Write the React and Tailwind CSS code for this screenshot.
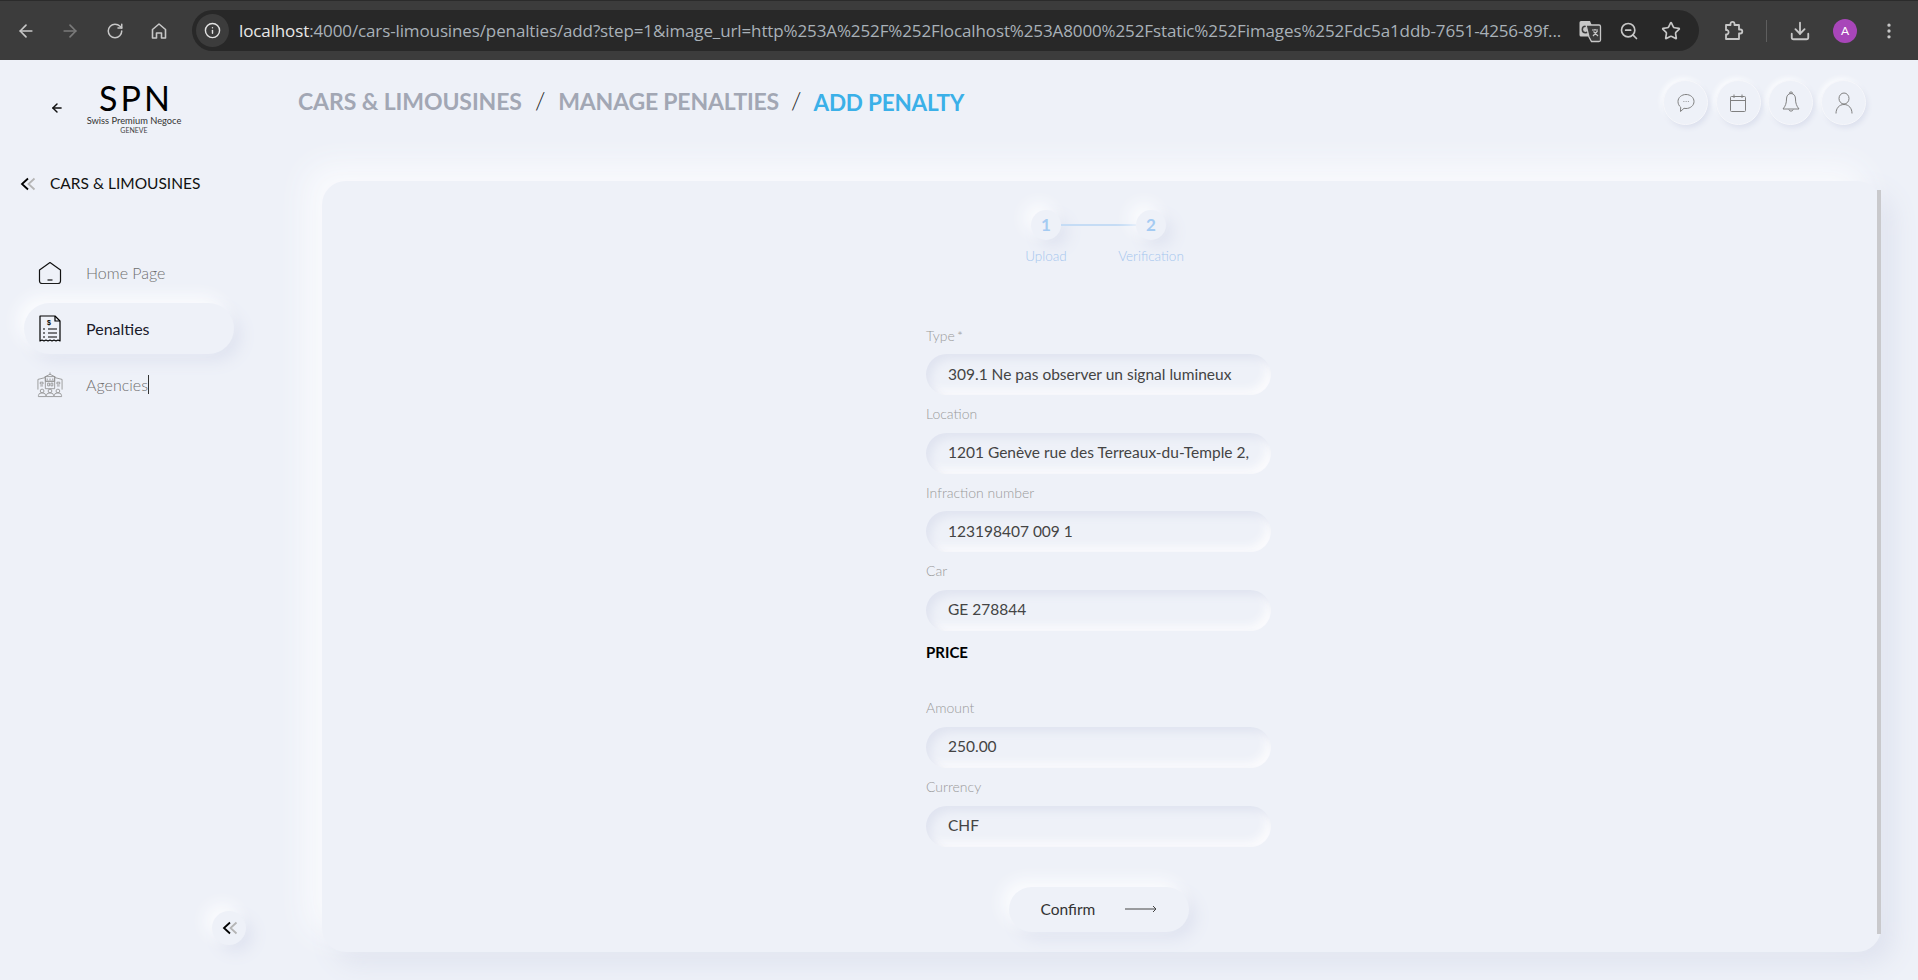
import { ArrowLeft, ArrowRight, RotateCw, Info, ZoomOut, Star, Download, MoreVertical } from 'lucide-react';

const raised = 'shadow-[-7px_-7px_16px_#fbfcfe,7px_7px_16px_#dfe3f0]';
const inset = 'shadow-[inset_5px_5px_9px_#e0e4f0,inset_-5px_-5px_9px_#fbfbfd]';

function DoubleChevron() {
  return (
    <svg width="16" height="14" viewBox="0 0 16 14" fill="none" strokeWidth="1.800">
      <path d="M8 1.500 2 7l6 5.500" stroke="#000" />
      <path d="M14.500 1.500 8.500 7l6 5.500" stroke="#b5b5b5" />
    </svg>
  );
}

function ChromeHome() {
  return (
    <svg width="20" height="20" viewBox="0 0 20 20" fill="none" stroke="#c7c7c7" strokeWidth="1.600">
      <path d="M3.500 8.500 10 3l6.500 5.500V17h-4v-5h-5v5h-4z" strokeLinejoin="round" />
    </svg>
  );
}

function TranslateIcon() {
  return (
    <svg width="24" height="24" viewBox="0 0 24 24">
      <path d="M1.500 3.500a1.500 1.500 0 0 1 1.500-1.500h9l1.500 3.500v12H3a1.500 1.500 0 0 1-1.500-1.500z" fill="#c7c7c7" />
      <circle cx="7.500" cy="10.500" r="3.200" fill="none" stroke="#3c3c3c" strokeWidth="1.500" />
      <path d="M8 6h13a1.500 1.500 0 0 1 1.500 1.500V21a1.500 1.500 0 0 1-1.500 1.500h-7.500L11 18z" fill="#3c3c3c" stroke="#c7c7c7" strokeWidth="1.300" />
      <path d="M14 11h6M17 10v1.500M15 17l4.500-5M15.500 12.500 20 17" stroke="#c7c7c7" strokeWidth="1.200" fill="none" />
    </svg>
  );
}

function PuzzleIcon() {
  return (
    <svg width="22" height="22" viewBox="0 0 22 22" fill="none" stroke="#c7c7c7" strokeWidth="1.800" strokeLinejoin="round">
      <path d="M3 5h4.500V3.800a2 2 0 0 1 4 0V5H16v4.500h1.300a2 2 0 0 1 0 4H16V19H3v-4.500h1.200a2.500 2.500 0 0 0 0-4.500H3z" />
    </svg>
  );
}

function HomeNavIcon() {
  return (
    <svg width="24" height="24" viewBox="0 0 24 24" fill="none" stroke="#111" strokeWidth="1.200" strokeLinejoin="round">
      <path d="M12 1.500 22.500 9v11a2.500 2.500 0 0 1-2.500 2.500H4A2.500 2.500 0 0 1 1.500 20V9z" />
      <path d="M9.500 19h5" />
    </svg>
  );
}

function ReceiptIcon() {
  return (
    <svg width="22" height="27" viewBox="0 0 22 27" fill="none" stroke="#000" strokeWidth="1.200">
      <path d="M1 1h15l5 5v20l-2-1-2 1-2-1-2 1-2-1-2 1-2-1-2 1-2-1-2 1z" strokeLinejoin="round" />
      <path d="M16 1v5h5" />
      <path d="M4 14h2M9 14h9M4 18h2M9 18h9M4 22h2M9 22h9" strokeWidth="1.200" />
      <text x="10" y="10" fontSize="7" fontWeight="700" fill="#000" stroke="none" textAnchor="middle" fontFamily="Liberation Sans, sans-serif">$</text>
    </svg>
  );
}

function AgencyIcon() {
  return (
    <svg width="28" height="27" viewBox="0 0 28 27" fill="none" stroke="#8f8f8f" strokeWidth="0.900">
      <path d="M14 0.500v2M9 5h10v5H9zM8 5.500 14 2.500l6 3" />
      <path d="M1 8l8-2v4M27 8l-8-2v4M1 8v11M27 8v11" />
      <path d="M9 10h10v8H9z" />
      <path d="M11 7v2M14 7v2M17 7v2M11.500 12h2v3h-2zM15 12h2v3h-2zM3.500 11h3v2h-3zM21.500 11h3v2h-3zM3.500 15h3M21.500 15h3" />
      <circle cx="5.500" cy="20.500" r="2" />
      <circle cx="14" cy="20.500" r="2" />
      <circle cx="22.500" cy="20.500" r="2" />
      <path d="M1.500 26.500v-1a4 3 0 0 1 8 0v1zM10 26.500v-1a4 3 0 0 1 8 0v1zM18.500 26.500v-1a4 3 0 0 1 8 0v1z" />
    </svg>
  );
}

function ChatIcon() {
  return (
    <svg width="18" height="20" viewBox="0 0 18 20" fill="none" stroke="#808080" strokeWidth="1">
      <path d="M9 1.500c4.400 0 8 3 8 7s-3.600 7-8 7c-.7 0-1.300-.1-2-.2L3.500 18.500l.2-4.300C2 12.900 1 10.800 1 8.500c0-4 3.600-7 8-7z" strokeLinejoin="round" />
      <path d="M6.500 8.500h.8M8.700 8.500h.8M10.900 8.500h.8" strokeWidth="1.200" />
    </svg>
  );
}

function CalendarIcon() {
  return (
    <svg width="16" height="18" viewBox="0 0 16 18" fill="none" stroke="#808080" strokeWidth="1">
      <rect x="0.500" y="2.500" width="15" height="15" rx="1" />
      <path d="M0.500 6.500h15M4 0.500v3.500M12 0.500v3.500" />
    </svg>
  );
}

function BellIcon() {
  return (
    <svg width="18" height="23" viewBox="0 0 18 23" fill="none" stroke="#808080" strokeWidth="1">
      <path d="M9 2.500c-3 0-4.500 2.500-4.500 5.500 0 4-1 7-3.500 10h16c-2.500-3-3.500-6-3.500-10 0-3-1.500-5.500-4.500-5.500z" strokeLinejoin="round" />
      <path d="M7.800 2.700a1.300 1.300 0 1 1 2.400 0M6.800 18.500a2.300 2.300 0 0 0 4.400 0" />
    </svg>
  );
}

function UserIcon() {
  return (
    <svg width="18" height="22" viewBox="0 0 18 22" fill="none" stroke="#808080" strokeWidth="1">
      <ellipse cx="9" cy="6.500" rx="5" ry="5.500" />
      <path d="M1 21.500c0-5 3-9 8-9s8 4 8 9" />
    </svg>
  );
}

function Field({ label, value, required }) {
  return (
    <div className="mb-[8.670px]">
      <label className="flex h-5 items-center text-[14px] font-light text-[#9a9a9a]">
        {label}
        {required && <span className="ml-[2px]">*</span>}
      </label>
      <input
        readOnly
        value={value}
        className={`mt-[9px] block h-[41px] w-full rounded-full bg-[#eef1f8] pb-[2px] pl-[22px] pr-[20px] text-[15.500px] text-[#444] outline-none ${inset}`}
      />
    </div>
  );
}

function TopButton({ children }) {
  return (
    <button className="flex h-[45px] w-[45px] items-center justify-center rounded-full border border-[#f6f7fb] bg-[#eef1f8] shadow-[2px_3px_5px_#dde1ee,-2px_-2px_5px_#fbfcfe]">
      {children}
    </button>
  );
}

export default function App() {
  return (
    <div className="flex h-[980px] w-[1918px] flex-col overflow-hidden bg-[#eef1f8] font-['Lato',sans-serif]">
      {/* browser bar */}
      <div className="flex h-[60px] items-center border-t border-[#2b2b2b] bg-[#3c3c3c] pl-[16px] pr-[16px]">
        <ArrowLeft size={20} color="#c7c7c7" />
        <ArrowRight size={20} color="#7a7a7a" className="ml-[24px]" />
        <RotateCw size={18} color="#c7c7c7" className="ml-[26px]" />
        <span className="ml-[25px]"><ChromeHome /></span>
        <div className="ml-[23px] flex h-[41px] w-[1507px] items-center rounded-full bg-[#282828] pl-[4px] pr-[16px]">
          <div className="flex h-[33px] w-[33px] items-center justify-center rounded-full bg-[#3c3c3c]">
            <Info size={17} color="#e3e3e3" />
          </div>
          <div className="ml-[10px] w-[1322px] overflow-hidden whitespace-nowrap font-['Open_Sans',sans-serif] text-[17px] tracking-[-0.12px] text-[#a9b1b8]">
            <span className="text-[#e8e8e8]">localhost</span>:4000/cars-limousines/penalties/add?step=1&amp;image_url=http%253A%252F%252Flocalhost%253A8000%252Fstatic%252Fimages%252Fdc5a1ddb-7651-4256-89f...
          </div>
          <span className="ml-[17px]"><TranslateIcon /></span>
          <ZoomOut size={20} color="#c7c7c7" className="ml-[17px]" />
          <Star size={20} color="#c7c7c7" className="ml-[22px]" />
        </div>
        <span className="ml-[24px]"><PuzzleIcon /></span>
        <div className="ml-[21px] h-[22px] w-px bg-[#5e5e5e]" />
        <Download size={22} color="#c7c7c7" className="ml-[22px]" />
        <div className="ml-[22px] flex h-[24px] w-[24px] items-center justify-center rounded-full bg-[#a846b9] text-[12px] text-white">A</div>
        <MoreVertical size={20} color="#c7c7c7" className="ml-[22px]" />
      </div>

      <div className="flex flex-1">
        {/* sidebar */}
        <aside className="flex w-[322px] shrink-0 flex-col">
          <div className="mt-[22px] flex h-[56px] items-start">
            <ArrowLeft size={14} color="#111" strokeWidth={2.500} className="ml-[50px] mt-[19px]" />
            <div className="ml-[23px] flex w-[94px] flex-col items-center">
              <div className="mt-[-1px] h-[33px] pl-[4px] text-[34px] font-normal leading-[33px] tracking-[3px] text-black">SPN</div>
              <div className="mt-[2px] whitespace-nowrap text-[9.300px] leading-[10px] text-[#333]">Swiss Premium Negoce</div>
              <div className="text-[7px] leading-[8px] text-[#444]">GENEVE</div>
            </div>
          </div>
          <div className="mt-[34px] flex h-[24px] items-center pl-[20px]">
            <DoubleChevron />
            <span className="ml-[14px] text-[15.500px] text-[#111]">CARS &amp; LIMOUSINES</span>
          </div>
          <nav className="ml-[24px] mt-[51px] flex w-[210px] flex-col gap-[5px]">
            <div className="flex h-[51px] items-center pl-[13px]">
              <span className="flex w-[26px] justify-center"><HomeNavIcon /></span>
              <span className="ml-[23px] text-[16px] font-light text-[#6f6f6f]">Home Page</span>
            </div>
            <div className={`flex h-[51px] items-center rounded-full bg-[#eef1f8] pl-[13px] ${raised}`}>
              <span className="flex w-[26px] justify-center"><ReceiptIcon /></span>
              <span className="ml-[23px] text-[16px] text-[#1a1a2a]">Penalties</span>
            </div>
            <div className="flex h-[51px] items-center pl-[13px]">
              <span className="flex w-[26px] justify-center"><AgencyIcon /></span>
              <span className="ml-[23px] border-r border-[#333] text-[16px] font-light leading-[19px] text-[#6f6f6f]">Agencies</span>
            </div>
          </nav>
          <button className={`mb-[35px] ml-[212px] mt-auto flex h-[34px] w-[34px] items-center justify-center rounded-full bg-[#eef1f8] pl-[2px] ${raised}`}>
            <DoubleChevron />
          </button>
        </aside>

        {/* main */}
        <main className="flex min-w-0 flex-1 flex-col pr-[37px]">
          <header className="flex h-[121px] items-start justify-between">
            <div className="ml-[-24px] mt-[25px] flex items-start">
              <span className="text-[23px] font-bold leading-[32px] tracking-[-0.1px] text-[#a2a7b4]">CARS &amp; LIMOUSINES</span>
              <span className="ml-[13px] text-[24px] font-light leading-[30px] text-[#222]">/</span>
              <span className="ml-[13px] text-[23px] font-bold leading-[32px] tracking-[-0.2px] text-[#a2a7b4]">MANAGE PENALTIES</span>
              <span className="ml-[12px] text-[24px] font-light leading-[30px] text-[#222]">/</span>
              <span className="ml-[12px] mt-[2px] text-[22.500px] font-bold leading-[32px] tracking-[-0.2px] text-[#3bb0e8]">ADD PENALTY</span>
            </div>
            <div className="mt-[20px] flex gap-[7.600px] pr-[15px]">
              <TopButton><ChatIcon /></TopButton>
              <TopButton><CalendarIcon /></TopButton>
              <TopButton><BellIcon /></TopButton>
              <TopButton><UserIcon /></TopButton>
            </div>
          </header>

          <section className="flex h-[771px] rounded-[24px] bg-[#eef1f8] shadow-[-16px_-16px_30px_#f9fafd,12px_12px_26px_#dfe3ef]">
            <div className="flex flex-1 flex-col items-center pr-[2px] pt-[29px]">
              {/* stepper */}
              <div className="flex items-center">
                <div className={`flex h-[30px] w-[30px] items-center justify-center rounded-full bg-[#eef1f8] text-[17px] font-bold text-[#a5cbf2] ${raised}`}>1</div>
                <div className="h-[2px] w-[75px] bg-[#c5dcf5]" />
                <div className={`flex h-[30px] w-[30px] items-center justify-center rounded-full bg-[#eef1f8] text-[17px] font-bold text-[#a5cbf2] ${raised}`}>2</div>
              </div>
              <div className="mt-[8px] flex h-[16px] items-center gap-[5px] text-[13.500px] font-light text-[#a5c6ee]">
                <span className="w-[100px] text-center">Upload</span>
                <span className="w-[100px] text-center">Verification</span>
              </div>

              {/* form */}
              <form className="mt-[61px] w-[345px]">
                <Field label="Type" required value="309.1 Ne pas observer un signal lumineux" />
                <Field label="Location" value="1201 Genève rue des Terreaux-du-Temple 2, Genève" />
                <Field label="Infraction number" value="123198407 009 1" />
                <Field label="Car" value="GE 278844" />
                <h3 className="mt-[11px] h-5 text-[15px] font-bold leading-5 text-black">PRICE</h3>
                <div className="mt-[36px]">
                  <Field label="Amount" value="250.00" />
                  <Field label="Currency" value="CHF" />
                </div>
                <button type="button" className={`mx-auto mt-[40px] flex h-[45px] w-[180px] items-center rounded-full bg-[#eef1f8] pl-[32px] text-[15.500px] text-[#333] ${raised}`}>
                  Confirm
                  <svg width="32" height="8" viewBox="0 0 32 8" fill="none" stroke="#444" strokeWidth="1" className="ml-[30px]">
                    <path d="M0 4h31M28 1l3 3-3 3" />
                  </svg>
                </button>
              </form>
            </div>
            <div className="mb-[18px] mt-[9px] w-[4px] bg-[#c9c9cc]" />
          </section>
        </main>
      </div>
    </div>
  );
}
